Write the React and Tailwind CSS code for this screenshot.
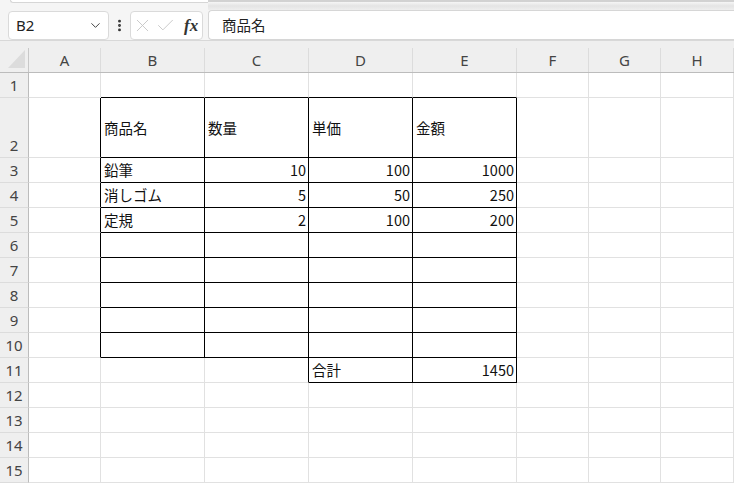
import React from 'react';
import { ChevronDown, X, Check, EllipsisVertical } from 'lucide-react';

const colWidths = ['w-[72px]', 'w-[104px]', 'w-[104px]', 'w-[104px]', 'w-[104px]', 'w-[72px]', 'w-[72px]', 'w-[73px]'];
const letters = ['A', 'B', 'C', 'D', 'E', 'F', 'G', 'H'];
const rowHeights = [25, 60, 25, 25, 25, 25, 25, 25, 25, 25, 25, 25, 25, 25, 25];

// [row, col] -> { text, right }
const cells = {
    '2-1': { text: '商品名' }, '2-2': { text: '数量' }, '2-3': { text: '単価' }, '2-4': { text: '金額' },
    '3-1': { text: '鉛筆' }, '3-2': { text: '10', right: true }, '3-3': { text: '100', right: true }, '3-4': { text: '1000', right: true },
    '4-1': { text: '消しゴム' }, '4-2': { text: '5', right: true }, '4-3': { text: '50', right: true }, '4-4': { text: '250', right: true },
    '5-1': { text: '定規' }, '5-2': { text: '2', right: true }, '5-3': { text: '100', right: true }, '5-4': { text: '200', right: true },
    '11-3': { text: '合計' }, '11-4': { text: '1450', right: true },
};

const inTable = (r, c) => (r >= 2 && r <= 10 && c >= 1 && c <= 4) || (r === 11 && (c === 3 || c === 4));

const Cell = ({ r, c }) => {
    const data = cells[`${r}-${c}`];
    const rightBlack = inTable(r, c) || inTable(r, c + 1);
    const bottomBlack = inTable(r, c) || inTable(r + 1, c);
    return (
        <div
            className={`${colWidths[c]} shrink-0 h-full border-r border-b flex items-center bg-white text-[14.5px] text-[#111] ${rightBlack ? 'border-r-black' : 'border-r-[#e1e1e1]'} ${bottomBlack ? 'border-b-black' : 'border-b-[#e1e1e1]'} ${data && data.right ? 'justify-end pr-[2px]' : 'pl-[3px]'}`}
        >
            {data ? data.text : ''}
        </div>
    );
};

const FormulaBar = () => (
    <div className="h-[40px] relative">
        {/* ribbon bottom edge */}
        <div className="h-[10px] flex">
            <div className="w-[208px] h-full">
                <div className="ml-[10px] h-[3px] bg-white border-b border-l border-[#d6d6d6] rounded-bl-[4px]"></div>
            </div>
            <div className="flex-1 h-full bg-gradient-to-b from-[#f6f6f6] via-[#e4e4e4] to-[#eeeeee] border-t-[2px] border-t-[#d2d2d2]"></div>
        </div>
        <div className="h-[30px] flex items-stretch">
            <div className="ml-[8px] mt-[1px] w-[101px] bg-white border border-[#dadada] rounded-[4px] flex items-center justify-between pl-[7px] pr-[5px]">
                <span className="text-[15px] text-[#222] font-['Noto_Sans',sans-serif]">B2</span>
                <ChevronDown size={15} strokeWidth={1.6} color="#444" />
            </div>
            <div className="w-[21px] flex items-center justify-center">
                <EllipsisVertical size={15} strokeWidth={2.6} color="#333" />
            </div>
            <div className="mt-[1px] w-[73px] bg-white border border-[#dadada] rounded-[4px] flex items-center pl-[1px]">
                <X size={21} strokeWidth={1} color="#c4c4c4" />
                <Check size={21} strokeWidth={1} color="#c4c4c4" className="ml-[2px]" />
                <span className="ml-[8px] text-[17px] leading-none italic font-semibold text-[#333] font-['Liberation_Serif',serif]">fx</span>
            </div>
            <div className="ml-[5px] flex-1 bg-white border border-r-0 border-[#d6d6d6] rounded-l-[4px] flex items-center pl-[13px]">
                <span className="text-[14.5px] text-[#222]">商品名</span>
            </div>
        </div>
    </div>
);

const App = () => {
    return (
        <div className="w-[734px] h-[483px] overflow-hidden bg-[#f5f5f5] font-['Noto_Sans_CJK_JP','Noto_Sans',sans-serif]">
            <FormulaBar />

            {/* column headers */}
            <div className="h-[33px] flex bg-[#efefef] border-t border-t-[#d8d8d8] border-b border-b-[#bcbcbc]">
                <div className="w-[29px] shrink-0 flex items-end pl-[8px] pb-[4px] border-r border-r-[#c8c8c8] mt-[7px]">
                    <svg width="17" height="18" viewBox="0 0 17 18">
                        <polygon points="17,0 17,18 0,18" fill="#dcdcdc" />
                    </svg>
                </div>
                {letters.map((l, i) => (
                    <div
                        key={l}
                        className={`${colWidths[i]} shrink-0 mt-[7px] border-r border-r-[#dcdcdc] flex items-center justify-center text-[15px] text-[#444] font-['Noto_Sans',sans-serif]`}
                    >
                        {l}
                    </div>
                ))}
            </div>

            {/* rows */}
            <div className="flex flex-col">
                {rowHeights.map((h, idx) => {
                    const r = idx + 1;
                    return (
                        <div key={r} className="flex" style={{ height: h }}>
                            <div className="w-[29px] shrink-0 h-full bg-[#efefef] border-r border-r-[#bcbcbc] border-b border-b-[#dcdcdc] flex items-end justify-center pb-[1px] text-[15px] leading-[22px] text-[#444] font-['Noto_Sans',sans-serif]">
                                {r}
                            </div>
                            {letters.map((l, c) => (
                                <Cell key={l} r={r} c={c} />
                            ))}
                        </div>
                    );
                })}
            </div>
        </div>
    );
};

export default App;
